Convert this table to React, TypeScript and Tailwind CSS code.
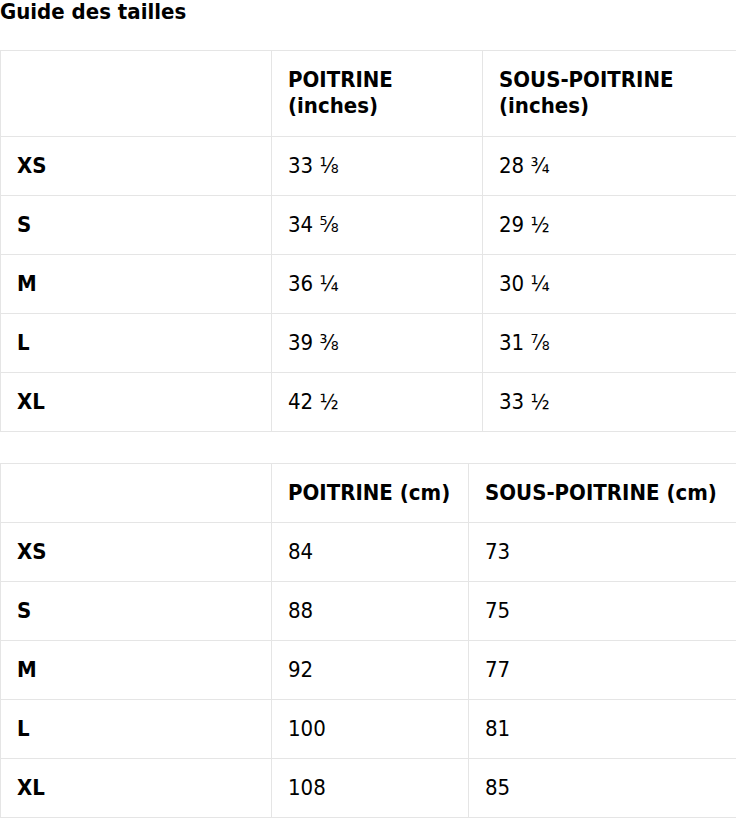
import React from 'react'

const inches = [
    { size: 'XS', chest: '33 ⅛', under: '28 ¾' },
    { size: 'S', chest: '34 ⅝', under: '29 ½' },
    { size: 'M', chest: '36 ¼', under: '30 ¼' },
    { size: 'L', chest: '39 ⅜', under: '31 ⅞' },
    { size: 'XL', chest: '42 ½', under: '33 ½' },
]

const cm = [
    { size: 'XS', chest: '84', under: '73' },
    { size: 'S', chest: '88', under: '75' },
    { size: 'M', chest: '92', under: '77' },
    { size: 'L', chest: '100', under: '81' },
    { size: 'XL', chest: '108', under: '85' },
]

const cell = 'border border-[#e5e5e5] px-4 py-4 text-left align-middle'

const App = () => {
    return (
        <div className="w-[736px] overflow-hidden bg-white text-black font-['DejaVu_Sans_Condensed','DejaVu_Sans',sans-serif] text-[22px] leading-[26px]">
            <h2 className="font-bold leading-[24px]">Guide des tailles</h2>

            <table className="mt-[26px] table-fixed border-collapse w-[770px]">
                <colgroup>
                    <col className="w-[271px]" />
                    <col className="w-[211px]" />
                    <col className="w-[288px]" />
                </colgroup>
                <thead>
                    <tr>
                        <th className={`${cell} pb-[17px]`}></th>
                        <th className={`${cell} pb-[17px] font-bold`}>POITRINE<br />(inches)</th>
                        <th className={`${cell} pb-[17px] font-bold`}>SOUS-POITRINE<br />(inches)</th>
                    </tr>
                </thead>
                <tbody>
                    {inches.map((row) => (
                        <tr key={row.size}>
                            <td className={`${cell} font-bold`}>{row.size}</td>
                            <td className={cell}>{row.chest}</td>
                            <td className={cell}>{row.under}</td>
                        </tr>
                    ))}
                </tbody>
            </table>

            <table className="mt-[31px] table-fixed border-collapse w-[736px]">
                <colgroup>
                    <col className="w-[271px]" />
                    <col className="w-[197px]" />
                    <col className="w-[268px]" />
                </colgroup>
                <thead>
                    <tr>
                        <th className={cell}></th>
                        <th className={`${cell} font-bold`}>POITRINE (cm)</th>
                        <th className={`${cell} font-bold`}>SOUS-POITRINE (cm)</th>
                    </tr>
                </thead>
                <tbody>
                    {cm.map((row) => (
                        <tr key={row.size}>
                            <td className={`${cell} font-bold`}>{row.size}</td>
                            <td className={cell}>{row.chest}</td>
                            <td className={cell}>{row.under}</td>
                        </tr>
                    ))}
                </tbody>
            </table>
        </div>
    )
}

export default App
